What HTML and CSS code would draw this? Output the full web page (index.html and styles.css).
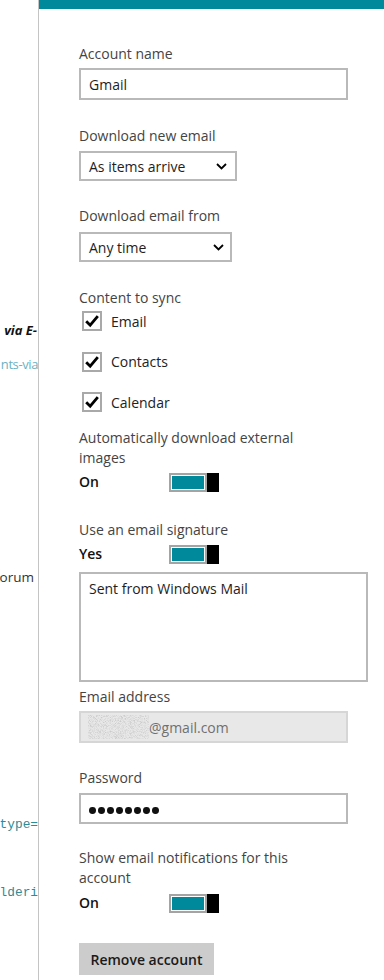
FILE: index.html
```
<!DOCTYPE html>
<html>
<head>
<meta charset="utf-8">
<link rel="stylesheet" href="styles.css">
</head>
<body>
<div class="screen">
  <div class="page">
    <div class="pline pl-1 bi">via E-</div>
    <div class="pline pl-2 link">nts-via</div>
    <div class="pline pl-3 plain">orum</div>
    <div class="pline pl-4 mono">type=</div>
    <div class="pline pl-5 mono">lderi</div>
  </div>
  <div class="flyout">
    <div class="label first">Account name</div>
    <div class="box input">Gmail</div>

    <div class="label gap">Download new email</div>
    <div class="box select sel-1"><span>As items arrive</span><svg class="chev" width="11" height="7" viewBox="0 0 11 7"><polyline points="1,1 5.5,5.5 10,1" fill="none" stroke="#000" stroke-width="1.8"/></svg></div>

    <div class="label gap-25">Download email from</div>
    <div class="box select sel-2"><span>Any time</span><svg class="chev" width="11" height="7" viewBox="0 0 11 7"><polyline points="1,1 5.5,5.5 10,1" fill="none" stroke="#000" stroke-width="1.8"/></svg></div>

    <div class="label gap">Content to sync</div>
    <div class="checks">
      <div class="check"><span class="cb"><svg width="16" height="16" viewBox="0 0 16 16"><polyline points="2.2,8.2 6.2,12.2 13.8,3.2" fill="none" stroke="#000" stroke-width="2.8"/></svg></span><span>Email</span></div>
      <div class="check"><span class="cb"><svg width="16" height="16" viewBox="0 0 16 16"><polyline points="2.2,8.2 6.2,12.2 13.8,3.2" fill="none" stroke="#000" stroke-width="2.8"/></svg></span><span>Contacts</span></div>
      <div class="check"><span class="cb"><svg width="16" height="16" viewBox="0 0 16 16"><polyline points="2.2,8.2 6.2,12.2 13.8,3.2" fill="none" stroke="#000" stroke-width="2.8"/></svg></span><span>Calendar</span></div>
    </div>

    <div class="label wrap gap-16">Automatically download external images</div>
    <div class="toggle-row"><span class="state">On</span><span class="toggle"><span class="track"><span class="fill"></span></span><span class="thumb"></span></span></div>

    <div class="label gap-28">Use an email signature</div>
    <div class="toggle-row"><span class="state">Yes</span><span class="toggle"><span class="track"><span class="fill"></span></span><span class="thumb"></span></span></div>

    <div class="box textarea">Sent from Windows Mail</div>

    <div class="label gap-5">Email address</div>
    <div class="box input disabled"><svg class="blur" width="61" height="24" viewBox="0 0 61 24"><filter id="noise" x="0" y="0" width="100%" height="100%"><feTurbulence type="fractalNoise" baseFrequency="1.2" numOctaves="2" seed="7"/><feColorMatrix type="matrix" values="0 0 0 0 0.6  0 0 0 0 0.6  0 0 0 0 0.6  2.6 0 0 0 -1.05"/></filter><rect width="61" height="24" filter="url(#noise)"/></svg><span>@gmail.com</span></div>

    <div class="label gap-25">Password</div>
    <div class="box input pwd"><span class="dots"><i></i><i></i><i></i><i></i><i></i><i></i><i></i><i></i></span></div>

    <div class="label wrap wrap-b gap-24">Show email notifications for this account</div>
    <div class="toggle-row"><span class="state">On</span><span class="toggle"><span class="track"><span class="fill"></span></span><span class="thumb"></span></span></div>

    <div class="button">Remove account</div>
  </div>
</div>
</body>
</html>
```

FILE: styles.css
```
* { box-sizing: border-box; }
html, body { margin: 0; padding: 0; background: #fff; }
body { font-family: "Open Sans", "Noto Sans", sans-serif; }

.screen {
  display: flex;
  width: 384px;
  height: 980px;
  overflow: hidden;
}

.page {
  width: 39px;
  flex: none;
  border-right: 1px solid #c4c4c4;
  overflow: hidden;
  display: flex;
  flex-direction: column;
  align-items: flex-end;
}
.pline {
  white-space: nowrap;
  height: 16px;
  line-height: 16px;
}
.pl-1 { margin-top: 322px; }
.pl-2 { margin-top: 18px; }
.pl-3 { margin-top: 197px; margin-right: 4px; }
.pl-4 { margin-top: 232px; }
.pl-5 { margin-top: 52px; }
.bi { font-weight: 700; font-style: italic; font-size: 13px; color: #111; margin-right: 1px; }
.link { font-size: 13px; letter-spacing: -0.4px; color: #6cb1c2; }
.plain { font-size: 13.5px; color: #333; }
.mono { font-family: "Liberation Mono", "DejaVu Sans Mono", monospace; font-size: 12.8px; color: #2a8b99; }

.flyout {
  width: 345px;
  flex: none;
  border-top: 9px solid #00899a;
  padding-left: 40px;
  display: flex;
  flex-direction: column;
  align-items: flex-start;
  color: #222;
  font-size: 14px;
}

.label {
  line-height: 20px;
  color: #444;
  font-size: 14px;
  margin-bottom: 4px;
}
.label.first { margin-top: 35px; }
.label.gap { margin-top: 26px; }
.label.gap-25 { margin-top: 25px; margin-bottom: 5px; }
.label.gap-24 { margin-top: 24px; }
.label.gap-16 { margin-top: 16px; }
.label.gap-28 { margin-top: 28px; }
.label.gap-5 { margin-top: 5px; }
.label.wrap { width: 250px; margin-bottom: 4px; }
.label.wrap-b { margin-bottom: 5px; }

.box {
  border: 2px solid #b9b9b9;
  display: flex;
  align-items: center;
  padding: 0 8px;
  color: #1e1e1e;
  font-size: 14px;
}
.input { width: 269px; height: 32px; }
.select { height: 30px; justify-content: space-between; }
.label + .select { margin-top: 1px; }
.sel-1 { width: 158px; padding-right: 8px; }
.sel-2 { width: 153px; padding-right: 6px; }
.chev { display: block; margin-top: 1px; }

.checks { display: flex; flex-direction: column; gap: 20.5px; margin-top: -1px; }
.check { display: flex; align-items: center; height: 20px; gap: 9px; color: #222; padding-left: 3px; }
.cb {
  width: 20px; height: 20px;
  border: 2px solid #a9a9a9;
  display: flex; align-items: center; justify-content: center;
}
.cb svg { display: block; }

.toggle-row { display: flex; align-items: center; height: 20px; line-height: 20px; }
.state { width: 90px; font-weight: 600; color: #111; }
.toggle { display: flex; height: 19px; }
.track {
  width: 38px; height: 19px;
  border: 2px solid #a4a4a4;
  padding: 1px;
  background: #fff;
}
.fill { display: block; height: 100%; background: #00899a; }
.thumb { width: 12px; height: 19px; background: #000; }

.textarea {
  width: 289px;
  height: 110px;
  margin-top: 8px;
  align-items: flex-start;
  padding: 5px 8px;
  line-height: 20px;
}

.disabled {
  background: #e8e8e8;
  border-color: #d6d6d6;
  color: #707070;
  padding-left: 7px;
}
.blur { display: block; }

.pwd { height: 31px; }
.dots { display: flex; gap: 2.2px; margin-top: 4px; }
.dots i { width: 6.8px; height: 6.8px; border-radius: 50%; background: #111; display: block; }

.button {
  margin-top: 30px;
  width: 135px;
  height: 32px;
  background: #cccccc;
  color: #1a1a1a;
  font-weight: 600;
  font-size: 14px;
  display: flex;
  align-items: center;
  justify-content: center;
}
```
